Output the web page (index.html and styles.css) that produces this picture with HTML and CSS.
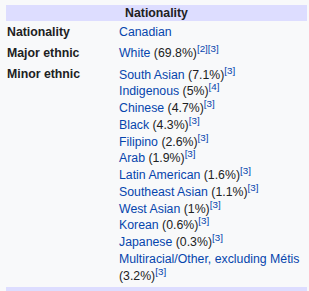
FILE: index.html
```html
<!DOCTYPE html>
<html>
<head>
<meta charset="utf-8">
<link rel="stylesheet" href="styles.css">
</head>
<body>
<table class="infobox">
  <tr><th class="header" colspan="2">Nationality</th></tr>
  <tr><th class="label">Nationality</th><td class="data"><a>Canadian</a></td></tr>
  <tr><th class="label">Major ethnic</th><td class="data"><a>White</a> (69.8%)<sup>[2]</sup><sup>[3]</sup></td></tr>
  <tr><th class="label">Minor ethnic</th><td class="data list">
    <div class="item"><a>South Asian</a> (7.1%)<sup>[3]</sup></div>
    <div class="item"><a>Indigenous</a> (5%)<sup>[4]</sup></div>
    <div class="item"><a>Chinese</a> (4.7%)<sup>[3]</sup></div>
    <div class="item"><a>Black</a> (4.3%)<sup>[3]</sup></div>
    <div class="item"><a>Filipino</a> (2.6%)<sup>[3]</sup></div>
    <div class="item"><a>Arab</a> (1.9%)<sup>[3]</sup></div>
    <div class="item"><a>Latin American</a> (1.6%)<sup>[3]</sup></div>
    <div class="item"><a>Southeast Asian</a> (1.1%)<sup>[3]</sup></div>
    <div class="item"><a>West Asian</a> (1%)<sup>[3]</sup></div>
    <div class="item"><a>Korean</a> (0.6%)<sup>[3]</sup></div>
    <div class="item"><a>Japanese</a> (0.3%)<sup>[3]</sup></div>
    <div class="item"><a>Multiracial/Other, excluding Métis</a> (3.2%)<sup>[3]</sup></div>
  </td></tr>
  <tr><th class="footer" colspan="2"></th></tr>
</table>
</body>
</html>
```

FILE: styles.css
```css
html, body {
  margin: 0;
  padding: 0;
  background: #f8f9fa;
}
body {
  font-family: "Liberation Sans", Arial, sans-serif;
  font-size: 12.3px;
  line-height: 16.75px;
  color: #202122;
}
.infobox {
  border-collapse: separate;
  border-spacing: 0;
  margin: 5px 0 0 6px;
  width: 301px;
}
.header {
  background: #ddf;
  text-align: center;
  font-weight: bold;
  padding: 0;
  height: 16px;
  line-height: 16px;
}
.label {
  text-align: left;
  vertical-align: top;
  font-weight: bold;
  padding: 3px 0 1px 1px;
  width: 112px;
}
.data {
  vertical-align: top;
  padding: 3px 0 1px 0;
}
.data.list {
  padding-top: 4px;
  padding-bottom: 3px;
}
.data a {
  color: #0645ad;
}
sup {
  font-size: 80%;
  line-height: 0;
  color: #0645ad;
}
.footer {
  background: #ddf;
  height: 6px;
  padding: 0;
}
```
